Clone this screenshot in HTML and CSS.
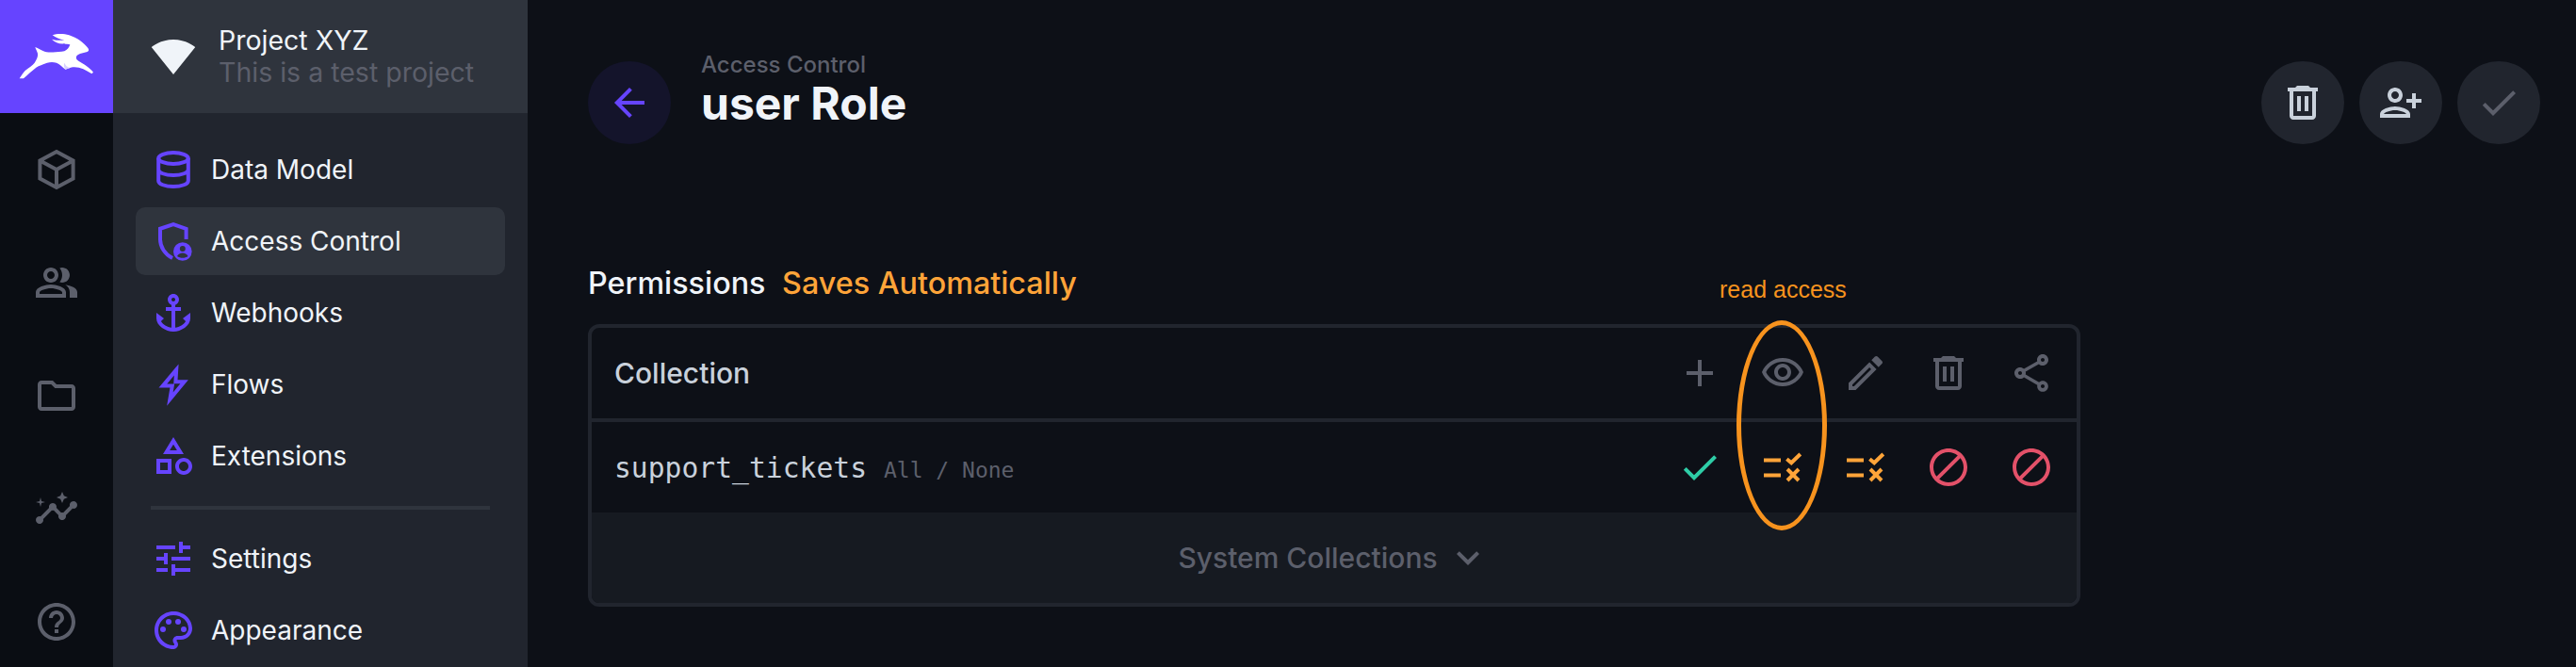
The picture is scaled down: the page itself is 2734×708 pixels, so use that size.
FILE: index.html
```html
<!DOCTYPE html>
<html lang="en">

<head>
    <meta charset="UTF-8">
    <meta name="viewport" content="width=device-width, initial-scale=1.0">
    <title>user Role</title>
    <link rel="stylesheet" href="styles.css">
</head>

<body>
    <div class="app">
        <div class="moduleBar">
            <div class="logo">
                <svg class="rabbitLogo" width="95" height="70" viewBox="0 0 285 210">
                    <path class="rabbit" d="M137 37C150 32 172 31 190 37C215 45 238 62 250 78C254 84 253 88 248 90L225 96C216 99 211 104 213 112C216 119 232 126 245 135C255 142 262 149 267 155L262 160C252 154 243 149 235 145C222 139 208 137 195 140L178 146C168 138 160 128 150 125C140 122 130 122 120 125C105 130 95 134 85 140C70 152 58 163 45 175L32 175C38 165 44 157 50 150C62 140 74 133 80 125C86 115 92 105 90 95C88 88 84 82 82 75C92 79 100 85 112 89C130 93 155 92 175 88C184 84 190 76 193 67C186 66 180 66 175 64C160 66 145 60 135 50C148 54 162 54 175 53C160 50 147 44 137 37Z" />
                    <path class="rabbitShade" d="M175 125C178 133 184 139 193 141L178 146C174 140 172 132 175 125Z" />
                </svg>
            </div>
            <a class="moduleLink">
                <svg class="icon strokeIcon" viewBox="0 0 24 24"><path d="M12 2.500 20.800 7.200v9.600L12 21.500 3.200 16.800V7.200zM3.200 7.200 12 12l8.800-4.800M12 12v9.500" /></svg>
            </a>
            <a class="moduleLink">
                <svg class="icon" viewBox="0 0 24 24"><path d="M16.670 13.130C18.040 14.060 19 15.320 19 17v3h4v-3c0-2.180-3.570-3.470-6.330-3.870zM15 12c2.210 0 4-1.790 4-4s-1.790-4-4-4c-.47 0-.91.1-1.330.24C14.500 5.270 15 6.580 15 8s-.5 2.730-1.330 3.760c.42.14.86.24 1.330.24zM9 12c2.210 0 4-1.790 4-4s-1.790-4-4-4-4 1.790-4 4 1.790 4 4 4zm0-6c1.100 0 2 .9 2 2s-.9 2-2 2-2-.9-2-2 .9-2 2-2zM9 13c-2.670 0-8 1.340-8 4v3h16v-3c0-2.660-5.330-4-8-4zm6 5H3v-.99C3.200 16.290 6.300 15 9 15s5.800 1.290 6 2z" /></svg>
            </a>
            <a class="moduleLink">
                <svg class="icon" viewBox="0 0 24 24"><path d="M9.170 6l2 2H20v10H4V6h5.170M10 4H4c-1.100 0-1.990.9-1.990 2L2 18c0 1.100.9 2 2 2h16c1.100 0 2-.9 2-2V8c0-1.100-.9-2-2-2h-8l-2-2z" /></svg>
            </a>
            <a class="moduleLink">
                <svg class="icon" viewBox="0 0 24 24"><path d="M21 8c-1.450 0-2.260 1.440-1.930 2.510l-3.550 3.560c-.3-.09-.74-.09-1.040 0l-2.550-2.550C12.270 10.450 11.460 9 10 9c-1.450 0-2.270 1.440-1.930 2.520l-4.560 4.550C2.440 15.740 1 16.550 1 18c0 1.100.9 2 2 2 1.450 0 2.260-1.440 1.930-2.510l4.550-4.560c.3.09.74.09 1.040 0l2.550 2.550C12.730 16.550 13.540 18 15 18c1.450 0 2.270-1.440 1.930-2.520l3.560-3.550c1.070.33 2.510-.48 2.510-1.930 0-1.100-.9-2-2-2z" /><path d="M15 9l.94-2.070L18 6l-2.060-.93L15 3l-.92 2.070L12 6l2.080.93zM3.500 11L4 9l2-.5L4 8l-.5-2L3 8l-2 .5L3 9z" /></svg>
            </a>
            <a class="moduleLink">
                <svg class="icon" viewBox="0 0 24 24"><path d="M11 18h2v-2h-2v2zm1-16C6.480 2 2 6.480 2 12s4.480 10 10 10 10-4.480 10-10S17.520 2 12 2zm0 18c-4.410 0-8-3.590-8-8s3.590-8 8-8 8 3.590 8 8-3.590 8-8 8zm0-14c-2.210 0-4 1.790-4 4h2c0-1.100.9-2 2-2s2 .9 2 2c0 2-3 1.750-3 5h2c0-2.250 3-2.500 3-5 0-2.210-1.790-4-4-4z" /></svg>
            </a>
        </div>

        <div class="sideNav">
            <div class="projectHeader">
                <svg class="wifiIcon" viewBox="0 0 24 24"><path d="M12.010 21.490L23.640 7c-.45-.34-4.930-4-11.640-4C5.280 3 .81 6.660.36 7l11.630 14.490.01.01.01-.01z" /></svg>
                <div>
                    <div class="projectName">Project XYZ</div>
                    <div class="projectDesc">This is a test project</div>
                </div>
            </div>
            <div class="navList">
                <a class="navItem">
                    <svg class="icon strokeIcon" viewBox="0 0 24 24"><ellipse cx="12" cy="6" rx="7.900" ry="3" /><path d="M4.100 6v12c0 1.660 3.500 3 7.900 3s7.900-1.340 7.900-3V6M4.100 12c0 1.660 3.500 3 7.900 3s7.900-1.340 7.900-3" /></svg>
                    Data Model
                </a>
                <a class="navItem active">
                    <svg class="icon strokeIcon" viewBox="0 0 24 24"><path d="M18.800 11V5.400L12 3 5 5.400V11c0 4 2.500 8 6.500 10" /><circle class="badge" cx="16.900" cy="17.500" r="4.900" /><circle class="badgeCut" cx="16.900" cy="16" r="1.500" /><path class="badgeCut" d="M14 20c.5-1.100 1.700-1.800 2.900-1.800s2.400.7 2.900 1.800c-1.600 1.200-4.200 1.200-5.800 0z" /></svg>
                    Access Control
                </a>
                <a class="navItem">
                    <svg class="icon" viewBox="0 0 24 24"><path d="M17 15l1.550 1.550c-.96 1.690-3.330 3.040-5.550 3.370V11h3V9h-3V7.820C14.160 7.400 15 6.300 15 5c0-1.650-1.350-3-3-3S9 3.350 9 5c0 1.300.84 2.400 2 2.820V9H8v2h3v8.920c-2.220-.33-4.590-1.680-5.550-3.370L7 15l-4-3v3c0 3.880 4.920 7 9 7s9-3.120 9-7v-3l-4 3zM12 4c.55 0 1 .45 1 1s-.45 1-1 1-1-.45-1-1 .45-1 1-1z" /></svg>
                    Webhooks
                </a>
                <a class="navItem">
                    <svg class="icon strokeIcon" viewBox="0 0 24 24"><path d="M13.600 4.200 6.400 12.800H11.400L10.200 19.800 17.800 10.600H13.200z" /></svg>
                    Flows
                </a>
                <a class="navItem">
                    <svg class="icon" viewBox="0 0 24 24"><path d="M12 2l-5.500 9h11L12 2zm0 3.840L13.930 9h-3.870L12 5.840zM17.500 13c-2.490 0-4.500 2.010-4.500 4.500s2.010 4.500 4.500 4.500 4.500-2.010 4.500-4.500-2.010-4.500-4.500-4.500zm0 7c-1.380 0-2.500-1.120-2.500-2.500s1.120-2.500 2.500-2.500 2.500 1.120 2.500 2.500-1.120 2.500-2.500 2.500zM3 21.500h8v-8H3v8zm2-6h4v4H5v-4z" /></svg>
                    Extensions
                </a>
                <div class="navDivider"></div>
                <a class="navItem">
                    <svg class="icon" viewBox="0 0 24 24"><path d="M3 17v2h6v-2H3zM3 5v2h10V5H3zm10 16v-2h8v-2h-8v-2h-2v6h2zM7 9v2H3v2h4v2h2V9H7zm14 4v-2H11v2h10zm-6-4h2V7h4V5h-4V3h-2v6z" /></svg>
                    Settings
                </a>
                <a class="navItem">
                    <svg class="icon" viewBox="0 0 24 24"><path d="M12 22C6.490 22 2 17.510 2 12S6.490 2 12 2s10 4.040 10 9c0 3.310-2.690 6-6 6h-1.770c-.28 0-.5.22-.5.5 0 .12.05.23.13.33.41.47.64 1.060.64 1.670 0 1.380-1.120 2.500-2.500 2.500zm0-18c-4.410 0-8 3.590-8 8s3.590 8 8 8c.28 0 .5-.22.5-.5 0-.16-.08-.28-.14-.35-.41-.46-.63-1.050-.63-1.650 0-1.380 1.120-2.500 2.500-2.500H16c2.210 0 4-1.790 4-4 0-3.860-3.590-7-8-7z" /><circle cx="6.500" cy="11.500" r="1.500" /><circle cx="9.500" cy="7.500" r="1.500" /><circle cx="14.500" cy="7.500" r="1.500" /><circle cx="17.500" cy="11.500" r="1.500" /></svg>
                    Appearance
                </a>
            </div>
        </div>

        <div class="main">
            <div class="pageHeader">
                <div class="roundButton backButton">
                    <svg class="icon" viewBox="0 0 24 24"><path d="M20 11H7.830l5.590-5.590L12 4l-8 8 8 8 1.410-1.410L7.830 13H20v-2z" /></svg>
                </div>
                <div class="titleBlock">
                    <div class="breadcrumb">Access Control</div>
                    <div class="pageTitle">user Role</div>
                </div>
                <div class="headerActions">
                    <div class="roundButton">
                        <svg class="icon" viewBox="0 0 24 24"><path fill-rule="evenodd" d="M9 3h6l1 1h4v2H4V4h4zM5 6h14v13c0 1.100-.9 2-2 2H7c-1.100 0-2-.9-2-2zm2 0v13h10V6zm2 2.500v8h2v-8zm4 0v8h2v-8z" /></svg>
                    </div>
                    <div class="roundButton">
                        <svg class="icon" viewBox="0 0 24 24"><path transform="translate(24 0) scale(-1 1)" d="M15 12c2.210 0 4-1.790 4-4s-1.790-4-4-4-4 1.790-4 4 1.790 4 4 4zm0-6c1.100 0 2 .9 2 2s-.9 2-2 2-2-.9-2-2 .9-2 2-2zm0 8c-2.670 0-8 1.340-8 4v2h16v-2c0-2.660-5.330-4-8-4zm-6 4c.22-.72 3.310-2 6-2 2.700 0 5.800 1.290 6 2H9zm-3-3v-3h3v-2H6V7H4v3H1v2h3v3h2z" /></svg>
                    </div>
                    <div class="roundButton disabled">
                        <svg class="icon" viewBox="0 0 24 24"><path d="M9 16.170L4.830 12l-1.420 1.410L9 19 21 7l-1.410-1.410z" /></svg>
                    </div>
                </div>
            </div>

            <div class="permissionsLabel">Permissions <span class="autoSave">Saves Automatically</span></div>

            <div class="permissionsTable">
                <div class="tableRow tableHead">
                    <div class="rowName">Collection</div>
                    <div class="cell"><svg class="icon" viewBox="0 0 24 24"><path d="M19 13h-6v6h-2v-6H5v-2h6V5h2v6h6v2z" /></svg></div>
                    <div class="cell"><svg class="icon" viewBox="0 0 24 24"><path d="M12 6c3.790 0 7.170 2.130 8.820 5.500C19.170 14.870 15.790 17 12 17s-7.170-2.130-8.820-5.500C4.830 8.130 8.210 6 12 6m0-2C7 4 2.730 7.110 1 11.500 2.730 15.890 7 19 12 19s9.270-3.110 11-7.500C21.270 7.110 17 4 12 4zm0 5c1.380 0 2.500 1.120 2.500 2.500S13.380 14 12 14s-2.500-1.120-2.500-2.500S10.620 9 12 9m0-2c-2.480 0-4.500 2.020-4.500 4.500S9.520 16 12 16s4.500-2.020 4.500-4.500S14.480 7 12 7z" /></svg></div>
                    <div class="cell"><svg class="icon" viewBox="0 0 24 24"><path d="M14.060 9.020l.92.92L5.920 19H5v-.92l9.060-9.060M17.660 3c-.25 0-.51.1-.7.29l-1.830 1.830 3.750 3.750 1.830-1.830c.39-.39.39-1.020 0-1.410l-2.340-2.340c-.2-.2-.45-.29-.71-.29zm-3.600 3.190L3 17.250V21h3.750L17.810 9.940l-3.750-3.750z" /></svg></div>
                    <div class="cell"><svg class="icon" viewBox="0 0 24 24"><path fill-rule="evenodd" d="M9 3h6l1 1h4v2H4V4h4zM5 6h14v13c0 1.100-.9 2-2 2H7c-1.100 0-2-.9-2-2zm2 0v13h10V6zm2 2.500v8h2v-8zm4 0v8h2v-8z" /></svg></div>
                    <div class="cell"><svg class="icon" viewBox="0 0 24 24"><path d="M18 16.080c-.76 0-1.440.3-1.960.77L8.910 12.700c.05-.23.09-.46.09-.7s-.04-.47-.09-.7l7.050-4.110c.54.5 1.250.81 2.040.81 1.660 0 3-1.340 3-3s-1.340-3-3-3-3 1.340-3 3c0 .24.04.47.09.7L8.040 9.810C7.500 9.310 6.790 9 6 9c-1.660 0-3 1.340-3 3s1.340 3 3 3c.79 0 1.500-.31 2.040-.81l7.120 4.160c-.05.21-.08.43-.08.65 0 1.610 1.310 2.920 2.920 2.920s2.920-1.310 2.920-2.920c0-1.610-1.310-2.920-2.920-2.920zM18 4c.55 0 1 .45 1 1s-.45 1-1 1-1-.45-1-1 .45-1 1-1zM6 13c-.55 0-1-.45-1-1s.45-1 1-1 1 .45 1 1-.45 1-1 1zm12 7.020c-.55 0-1-.45-1-1s.45-1 1-1 1 .45 1 1-.45 1-1 1z" /></svg></div>
                </div>
                <div class="tableRow">
                    <div class="rowName monoName">support_tickets <span class="presets">All / None</span></div>
                    <div class="cell allowed"><svg class="icon" viewBox="0 0 24 24"><path d="M9 16.170L4.830 12l-1.420 1.410L9 19 21 7l-1.410-1.410z" /></svg></div>
                    <div class="cell partial"><svg class="icon" viewBox="0 0 24 24"><path d="M2 7.200h9v2H2zM2 15.200h9v2H2z" /><path class="ruleMark" d="M14.200 7.600l2.400 2 4.800-4.600M14.500 13l6 6M20.500 13l-6 6" /></svg></div>
                    <div class="cell partial"><svg class="icon" viewBox="0 0 24 24"><path d="M2 7.200h9v2H2zM2 15.200h9v2H2z" /><path class="ruleMark" d="M14.200 7.600l2.400 2 4.800-4.600M14.500 13l6 6M20.500 13l-6 6" /></svg></div>
                    <div class="cell blocked"><svg class="icon" viewBox="0 0 24 24"><path d="M12 2C6.480 2 2 6.480 2 12s4.480 10 10 10 10-4.480 10-10S17.520 2 12 2zM4 12c0-4.420 3.580-8 8-8 1.850 0 3.550.63 4.900 1.690L5.690 16.900C4.630 15.550 4 13.850 4 12zm8 8c-1.850 0-3.550-.63-4.900-1.690L18.310 7.100C19.370 8.450 20 10.150 20 12c0 4.420-3.580 8-8 8z" /></svg></div>
                    <div class="cell blocked"><svg class="icon" viewBox="0 0 24 24"><path d="M12 2C6.480 2 2 6.480 2 12s4.480 10 10 10 10-4.480 10-10S17.520 2 12 2zM4 12c0-4.420 3.580-8 8-8 1.850 0 3.550.63 4.900 1.690L5.690 16.900C4.630 15.550 4 13.850 4 12zm8 8c-1.850 0-3.550-.63-4.900-1.690L18.310 7.100C19.370 8.450 20 10.150 20 12c0 4.420-3.580 8-8 8z" /></svg></div>
                </div>
                <div class="systemToggle">
                    System Collections
                    <svg class="icon" viewBox="0 0 24 24"><path d="M16.590 8.590L12 13.170 7.410 8.590 6 10l6 6 6-6z" /></svg>
                </div>
                <div class="readLabel">read access</div>
                <div class="readOval"></div>
            </div>
        </div>
    </div>
</body>

</html>
```

FILE: styles.css
```css
html {
    height: 100%;
    background-color: #0d1017;
}

body {
    margin: 0;
    height: 100%;
    overflow: hidden;
    font-family: Inter, "Noto Sans", sans-serif;
    font-size: 28px;
    color: #f0f4f9;
}

.app {
    display: flex;
    height: 708px;
    overflow: hidden;
}

.icon {
    display: block;
    flex: none;
    width: 48px;
    height: 48px;
    fill: currentColor;
}

.strokeIcon {
    fill: none;
    stroke: currentColor;
    stroke-width: 2;
}

/* far left column */
.moduleBar {
    flex: none;
    width: 120px;
    background-color: #0a0d13;
    color: #5c5f6b;
}

.logo {
    display: flex;
    justify-content: center;
    align-items: center;
    height: 120px;
    background-color: #6644ff;
}

.rabbitLogo {
    margin-right: 5px;
}

.rabbit {
    fill: #ffffff;
}

.rabbitShade {
    fill: #d8d0ff;
}

.moduleLink {
    display: flex;
    justify-content: center;
    align-items: center;
    height: 120px;
}

/* project nav */
.sideNav {
    flex: none;
    width: 440px;
    background-color: #21252e;
}

.projectHeader {
    display: flex;
    align-items: center;
    gap: 24px;
    height: 120px;
    padding-left: 40px;
    background-color: #2f343d;
}

.wifiIcon {
    flex: none;
    width: 48px;
    height: 48px;
    fill: #f0f4f9;
}

.projectName {
    line-height: 34px;
    font-size: 28.5px;
}

.projectDesc {
    line-height: 34px;
    font-size: 28.5px;
    color: #5c5f6b;
}

.navList {
    display: flex;
    flex-direction: column;
    gap: 4px;
    padding: 24px 24px 0;
}

.navItem {
    display: flex;
    align-items: center;
    gap: 16px;
    flex: none;
    height: 72px;
    padding-left: 16px;
    border-radius: 10px;
    color: #f0f4f9;
}

.navItem .icon {
    color: #6644ff;
}

.navItem.active {
    background-color: #2f343d;
}

.badge {
    fill: #6644ff;
    stroke: none;
}

.badgeCut {
    fill: #2f343d;
    stroke: none;
}

.navDivider {
    flex: none;
    height: 4px;
    margin: 13px 16px 12px;
    background-color: #2f343d;
}

/* main content */
.main {
    flex: 1;
    padding: 54px 38px 0 64px;
}

.pageHeader {
    display: flex;
    align-items: flex-start;
}

.roundButton {
    display: flex;
    justify-content: center;
    align-items: center;
    width: 88px;
    height: 88px;
    margin-top: 11px;
    border-radius: 50%;
    background-color: #21252e;
    color: #c9d1db;
}

.roundButton.disabled {
    color: #5c5f6b;
}

.backButton {
    background-color: #14142b;
    color: #6644ff;
}

.titleBlock {
    flex: 1;
    margin-left: 32px;
}

.breadcrumb {
    height: 28px;
    line-height: 30px;
    font-size: 24px;
    font-weight: 500;
    color: #5c5f6b;
}

.pageTitle {
    line-height: 56px;
    font-size: 48px;
    font-weight: 700;
}

.headerActions {
    display: flex;
    gap: 16px;
}

.permissionsLabel {
    height: 36px;
    margin-top: 129px;
    margin-bottom: 26px;
    line-height: 38px;
    font-size: 32.3px;
    font-weight: 500;
}

.autoSave {
    margin-left: 9px;
    color: #ffa439;
}

.permissionsTable {
    position: relative;
    width: 1584px;
    box-sizing: border-box;
    border: 4px solid #21252e;
    border-radius: 12px;
}

.tableRow {
    display: flex;
    align-items: center;
    height: 96px;
    padding: 0 4px 0 24px;
}

.tableHead {
    border-bottom: 4px solid #21252e;
    color: #5c5f6b;
}

.rowName {
    flex: 1;
    font-size: 30px;
    font-weight: 500;
    color: #c9d1db;
}

.monoName {
    font-family: "DejaVu Sans Mono", "Liberation Mono", monospace;
    font-size: 29.7px;
    font-weight: 400;
}

.presets {
    font-size: 23px;
    color: #5c5f6b;
}

.cell {
    display: flex;
    justify-content: center;
    width: 88px;
}

.allowed {
    color: #2ecda7;
}

.partial {
    color: #ffa439;
}

.blocked {
    color: #e35169;
}

.ruleMark {
    fill: none;
    stroke: currentColor;
    stroke-width: 2;
}

.systemToggle {
    display: flex;
    justify-content: center;
    align-items: center;
    gap: 8px;
    height: 96px;
    border-radius: 0 0 8px 8px;
    background-color: #161a21;
    color: #5c5f6b;
    font-size: 30px;
    font-weight: 500;
}

/* annotation drawn over the table */
.readLabel {
    position: absolute;
    left: 1197px;
    top: -55px;
    line-height: 28px;
    font-family: "Liberation Sans", Arial, sans-serif;
    font-size: 25px;
    color: #f7931e;
}

.readOval {
    position: absolute;
    left: 1215px;
    top: -8px;
    box-sizing: border-box;
    width: 96px;
    height: 223px;
    border: 5px solid #f7931e;
    border-radius: 50%;
}
```
